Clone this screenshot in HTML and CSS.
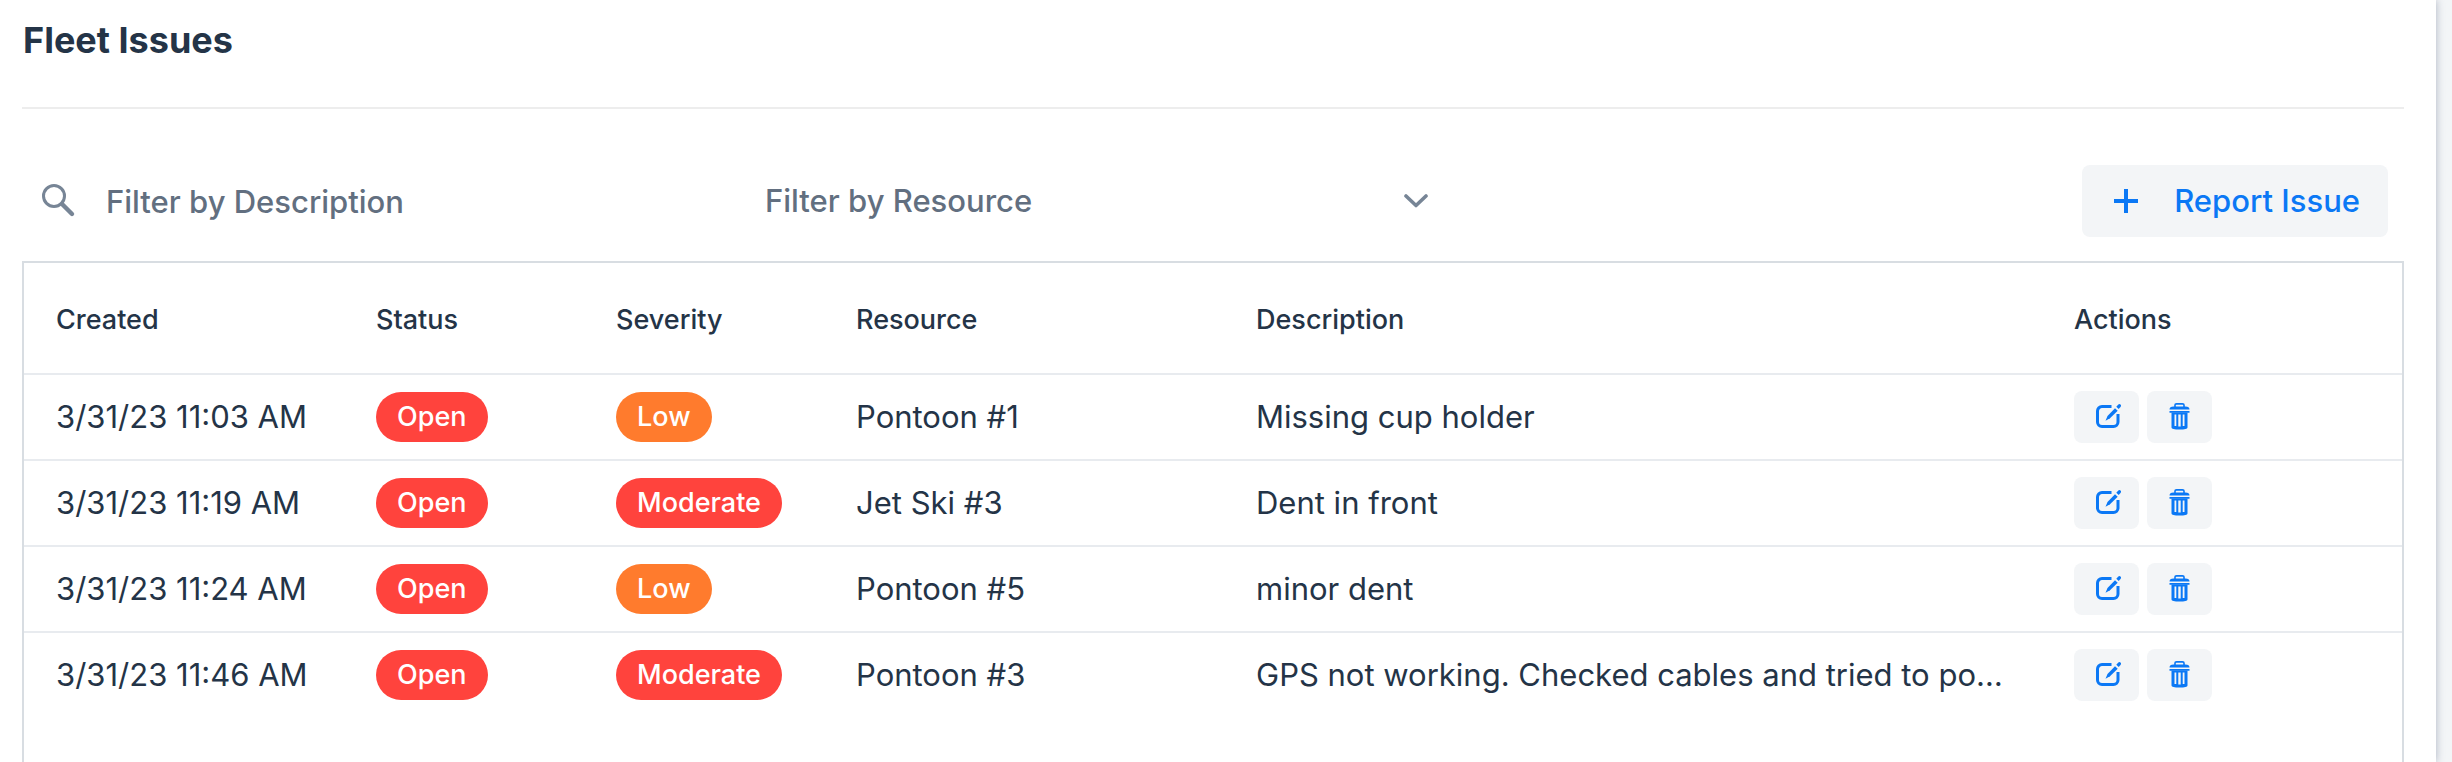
FILE: index.html
```
<!DOCTYPE html>
<html lang="en">
<head>
  <meta charset="utf-8">
  <title>Fleet Issues</title>
  <link rel="stylesheet" href="styles.css">
</head>
<body>
  <!-- Icon symbols -->
  <svg class="sprite" aria-hidden="true">
    <symbol id="icon-edit" viewBox="-2 0 28 28">
      <path d="M16.500 3.500H7A4.500 4.500 0 0 0 2.500 8V19A4.500 4.500 0 0 0 7 23.500H18.500A4.500 4.500 0 0 0 23 19V11" fill="none" stroke="currentColor" stroke-width="3"/>
      <path d="M10.500 17.700l2-4.700 7.500-7.700 2.700 2.500-7.700 7.500z" fill="currentColor"/>
      <path d="M21.300 3.800l2-2.300q1.200-1 2.200 0t.2 2.200l-2 2.400z" fill="currentColor"/>
    </symbol>
    <symbol id="icon-trash" viewBox="0.5 1.500 28 28">
      <path d="M9.500 5.500V3.500Q9.500 2.400 11 2.400h6q1.500 0 1.500 1.100v2" fill="none" stroke="currentColor" stroke-width="1.600"/>
      <path d="M4 8q0-3 4-3h12q4 0 4 3zM4 9.500h20v1.800H4z" fill="currentColor"/>
      <path fill-rule="evenodd" d="M6 11h16v15q0 2-8 2t-8-2zM9 13v11.500h1.800V13zM12.800 13v12h2.400V13zM17.200 13v11.500H19V13z" fill="currentColor"/>
    </symbol>
  </svg>

  <main class="card">
    <header class="card-header">
      <h1 class="card-title">Fleet Issues</h1>
    </header>

    <!-- Filters -->
    <div class="toolbar">
      <label class="filter filter-description">
        <svg class="filter-icon" viewBox="0 1 32 32" aria-hidden="true">
          <circle cx="12" cy="12" r="10.500" fill="none" stroke="currentColor" stroke-width="3"/>
          <path d="M20 20l10 10" fill="none" stroke="currentColor" stroke-width="4.400" stroke-linecap="round"/>
        </svg>
        <input type="text" class="filter-input" placeholder="Filter by Description" aria-label="Filter by Description">
      </label>
      <label class="filter filter-resource">
        <select class="filter-select" aria-label="Filter by Resource">
          <option>Filter by Resource</option>
        </select>
        <svg class="chevron" viewBox="0 0 24 14" aria-hidden="true">
          <path d="M2 2l10 9.500L22 2" fill="none" stroke="currentColor" stroke-width="3.600" stroke-linecap="round" stroke-linejoin="round"/>
        </svg>
      </label>
      <button type="button" class="btn report-btn">
        <svg class="plus" viewBox="0 0 24 24" aria-hidden="true"><path d="M10 0h4v10h10v4H14v10h-4V14H0v-4h10z" fill="currentColor"/></svg>
        Report Issue
      </button>
    </div>

    <!-- Issues grid -->
    <div class="grid">
      <table class="issues">
        <colgroup>
          <col class="col-created">
          <col class="col-status">
          <col class="col-severity">
          <col class="col-resource">
          <col>
          <col class="col-actions">
        </colgroup>
        <thead>
          <tr>
            <th>Created</th>
            <th>Status</th>
            <th>Severity</th>
            <th>Resource</th>
            <th>Description</th>
            <th>Actions</th>
          </tr>
        </thead>
        <tbody>
          <tr>
            <td>3/31/23 11:03 AM</td>
            <td><span class="badge badge-error">Open</span></td>
            <td><span class="badge badge-warning">Low</span></td>
            <td>Pontoon #1</td>
            <td>Missing cup holder</td>
            <td>
              <div class="actions">
                <button type="button" class="btn icon-btn" aria-label="Edit"><svg><use href="#icon-edit"/></svg></button>
                <button type="button" class="btn icon-btn" aria-label="Delete"><svg><use href="#icon-trash"/></svg></button>
              </div>
            </td>
          </tr>
          <tr>
            <td>3/31/23 11:19 AM</td>
            <td><span class="badge badge-error">Open</span></td>
            <td><span class="badge badge-error">Moderate</span></td>
            <td>Jet Ski #3</td>
            <td>Dent in front</td>
            <td>
              <div class="actions">
                <button type="button" class="btn icon-btn" aria-label="Edit"><svg><use href="#icon-edit"/></svg></button>
                <button type="button" class="btn icon-btn" aria-label="Delete"><svg><use href="#icon-trash"/></svg></button>
              </div>
            </td>
          </tr>
          <tr>
            <td>3/31/23 11:24 AM</td>
            <td><span class="badge badge-error">Open</span></td>
            <td><span class="badge badge-warning">Low</span></td>
            <td>Pontoon #5</td>
            <td>minor dent</td>
            <td>
              <div class="actions">
                <button type="button" class="btn icon-btn" aria-label="Edit"><svg><use href="#icon-edit"/></svg></button>
                <button type="button" class="btn icon-btn" aria-label="Delete"><svg><use href="#icon-trash"/></svg></button>
              </div>
            </td>
          </tr>
          <tr>
            <td>3/31/23 11:46 AM</td>
            <td><span class="badge badge-error">Open</span></td>
            <td><span class="badge badge-error">Moderate</span></td>
            <td>Pontoon #3</td>
            <td>GPS not working. Checked cables and tried to po…</td>
            <td>
              <div class="actions">
                <button type="button" class="btn icon-btn" aria-label="Edit"><svg><use href="#icon-edit"/></svg></button>
                <button type="button" class="btn icon-btn" aria-label="Delete"><svg><use href="#icon-trash"/></svg></button>
              </div>
            </td>
          </tr>
        </tbody>
      </table>
    </div>
  </main>
</body>
</html>
```

FILE: styles.css
```
* {
  margin: 0;
  padding: 0;
  box-sizing: border-box;
}

body {
  background: #f3f5f7;
  color: #243447;
  font-family: Inter, "Liberation Sans", sans-serif;
  font-size: 31px;
  line-height: 40px;
  padding-right: 16px;
}

.sprite {
  display: none;
}

.card {
  display: flex;
  flex-direction: column;
  min-height: 100vh;
  padding: 0 32px 0 22px;
  background: #fff;
  box-shadow: 0 0 8px rgba(36, 52, 90, 0.35);
}

.card-header {
  padding: 16px 0 43px;
  border-bottom: 2px solid #ededed;
}

.card-title {
  padding-left: 1px;
  font-size: 36px;
  line-height: 48px;
  font-weight: 700;
}

/* Filters */
.toolbar {
  display: flex;
  align-items: center;
  padding: 56px 16px 24px 0;
}

.filter {
  display: flex;
  align-items: center;
  height: 72px;
  color: #778596;
}

.filter-description {
  width: 727px;
  padding-left: 20px;
}

.filter-resource {
  width: 695px;
  padding: 0 16px;
}

.filter-icon {
  width: 32px;
  height: 32px;
  margin-right: 32px;
  overflow: visible;
}

.filter-input,
.filter-select {
  flex: 1;
  min-width: 0;
  height: 72px;
  border: 0;
  background: transparent;
  color: #626f80;
  font: inherit;
  font-weight: 500;
  appearance: none;
}

.filter-input::placeholder {
  color: #626f80;
  opacity: 1;
}

.chevron {
  width: 24px;
  height: 14px;
}

/* Buttons */
.btn {
  display: flex;
  align-items: center;
  justify-content: center;
  border: 0;
  border-radius: 8px;
  background: #f3f5f7;
  color: #0b78f5;
  font: inherit;
  font-weight: 500;
  cursor: pointer;
}

.report-btn {
  height: 72px;
  margin-left: auto;
  padding: 0 28px 0 32px;
  gap: 36px;
}

.plus {
  width: 24px;
  height: 24px;
}

.actions {
  display: flex;
  gap: 8px;
}

.icon-btn {
  width: 65px;
  height: 52px;
}

.icon-btn svg {
  width: 28px;
  height: 28px;
}

/* Grid */
.grid {
  flex: 1;
  border: 2px solid #d8dde2;
  border-bottom: 0;
}

.issues {
  width: 100%;
  table-layout: fixed;
  border-collapse: separate;
  border-spacing: 0;
}

.col-created {
  width: 320px;
}

.col-status,
.col-severity {
  width: 240px;
}

.col-resource {
  width: 400px;
}

.col-actions {
  width: 360px;
}

.issues th,
.issues td {
  padding: 0 32px;
  border-bottom: 2px solid #e8ebef;
  text-align: left;
  vertical-align: middle;
  white-space: nowrap;
}

.issues th {
  height: 112px;
  padding-top: 3px;
  font-size: 27px;
  font-weight: 500;
}

.issues td {
  height: 86px;
}

.issues tbody tr:last-child td {
  border-bottom-color: transparent;
}

.badge {
  display: block;
  width: fit-content;
  padding: 0 21px;
  border-radius: 25px;
  color: #fff;
  font-size: 27px;
  font-weight: 500;
  line-height: 50px;
}

.badge-error {
  background: #ff433d;
}

.badge-warning {
  background: #ff7b2d;
}
```
